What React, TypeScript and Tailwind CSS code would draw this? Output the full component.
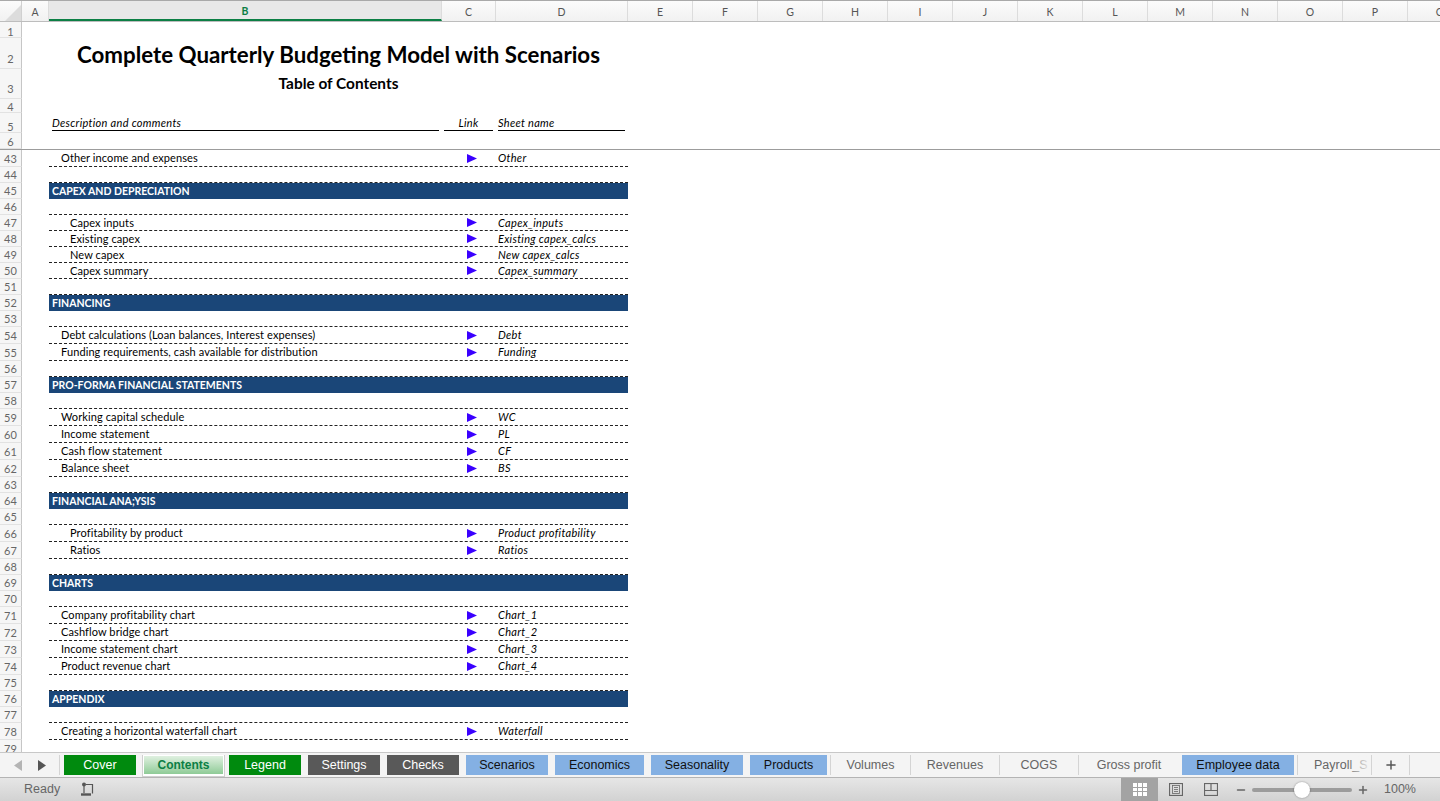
import { Minus, Plus } from "lucide-react";

const columns = [
  { name: "A", w: "w-[27px]" },
  { name: "B", w: "w-[393px]", active: true },
  { name: "C", w: "w-[54px]" },
  { name: "D", w: "w-[132px]" },
  { name: "E", w: "w-[65px]" },
  { name: "F", w: "w-[65px]" },
  { name: "G", w: "w-[65px]" },
  { name: "H", w: "w-[65px]" },
  { name: "I", w: "w-[65px]" },
  { name: "J", w: "w-[65px]" },
  { name: "K", w: "w-[65px]" },
  { name: "L", w: "w-[65px]" },
  { name: "M", w: "w-[65px]" },
  { name: "N", w: "w-[65px]" },
  { name: "O", w: "w-[65px]" },
  { name: "P", w: "w-[65px]" },
  { name: "Q", w: "w-[65px]" },
];

type Row = {
  n: number;
  h: string;
  kind?: "band" | "link" | "rule";
  label?: string;
  pad?: string;
  sheet?: string;
};

const rows: Row[] = [
  { n: 43, h: "h-[17px]", kind: "link", label: "Other income and expenses", pad: "pl-[12px]", sheet: "Other" },
  { n: 44, h: "h-[16px]", kind: "rule" },
  { n: 45, h: "h-[16px]", kind: "band", label: "CAPEX AND DEPRECIATION" },
  { n: 46, h: "h-[16px]", kind: "rule" },
  { n: 47, h: "h-[16px]", kind: "link", label: "Capex inputs", pad: "pl-[21px]", sheet: "Capex_inputs" },
  { n: 48, h: "h-[16px]", kind: "link", label: "Existing capex", pad: "pl-[21px]", sheet: "Existing capex_calcs" },
  { n: 49, h: "h-[16px]", kind: "link", label: "New capex", pad: "pl-[21px]", sheet: "New capex_calcs" },
  { n: 50, h: "h-[16px]", kind: "link", label: "Capex summary", pad: "pl-[21px]", sheet: "Capex_summary" },
  { n: 51, h: "h-[16px]", kind: "rule" },
  { n: 52, h: "h-[16px]", kind: "band", label: "FINANCING" },
  { n: 53, h: "h-[16px]", kind: "rule" },
  { n: 54, h: "h-[17px]", kind: "link", label: "Debt calculations (Loan balances, Interest expenses)", pad: "pl-[12px]", sheet: "Debt" },
  { n: 55, h: "h-[17px]", kind: "link", label: "Funding requirements, cash available for distribution", pad: "pl-[12px]", sheet: "Funding" },
  { n: 56, h: "h-[16px]", kind: "rule" },
  { n: 57, h: "h-[16px]", kind: "band", label: "PRO-FORMA FINANCIAL STATEMENTS" },
  { n: 58, h: "h-[16px]", kind: "rule" },
  { n: 59, h: "h-[17px]", kind: "link", label: "Working capital schedule", pad: "pl-[12px]", sheet: "WC" },
  { n: 60, h: "h-[17px]", kind: "link", label: "Income statement", pad: "pl-[12px]", sheet: "PL" },
  { n: 61, h: "h-[17px]", kind: "link", label: "Cash flow statement", pad: "pl-[12px]", sheet: "CF" },
  { n: 62, h: "h-[17px]", kind: "link", label: "Balance sheet", pad: "pl-[12px]", sheet: "BS" },
  { n: 63, h: "h-[16px]", kind: "rule" },
  { n: 64, h: "h-[16px]", kind: "band", label: "FINANCIAL ANA;YSIS" },
  { n: 65, h: "h-[16px]", kind: "rule" },
  { n: 66, h: "h-[17px]", kind: "link", label: "Profitability by product", pad: "pl-[21px]", sheet: "Product profitability" },
  { n: 67, h: "h-[17px]", kind: "link", label: "Ratios", pad: "pl-[21px]", sheet: "Ratios" },
  { n: 68, h: "h-[16px]", kind: "rule" },
  { n: 69, h: "h-[16px]", kind: "band", label: "CHARTS" },
  { n: 70, h: "h-[16px]", kind: "rule" },
  { n: 71, h: "h-[17px]", kind: "link", label: "Company profitability chart", pad: "pl-[12px]", sheet: "Chart_1" },
  { n: 72, h: "h-[17px]", kind: "link", label: "Cashflow bridge chart", pad: "pl-[12px]", sheet: "Chart_2" },
  { n: 73, h: "h-[17px]", kind: "link", label: "Income statement chart", pad: "pl-[12px]", sheet: "Chart_3" },
  { n: 74, h: "h-[17px]", kind: "link", label: "Product revenue chart", pad: "pl-[12px]", sheet: "Chart_4" },
  { n: 75, h: "h-[16px]", kind: "rule" },
  { n: 76, h: "h-[16px]", kind: "band", label: "APPENDIX" },
  { n: 77, h: "h-[16px]", kind: "rule" },
  { n: 78, h: "h-[17px]", kind: "link", label: "Creating a horizontal waterfall chart", pad: "pl-[12px]", sheet: "Waterfall" },
  { n: 79, h: "h-[17px]" },
];

const tabs = [
  { name: "Cover", w: "w-[72px] ml-[4px]", cls: "bg-[#008a0e] text-white" },
  { name: "Contents", active: true, w: "w-[83px] ml-[6px]", cls: "text-[#0c7f45] font-bold text-[12px]" },
  { name: "Legend", w: "w-[72px] ml-[4px]", cls: "bg-[#008a0e] text-white" },
  { name: "Settings", w: "w-[72px] ml-[7px]", cls: "bg-[#595959] text-white" },
  { name: "Checks", w: "w-[72px] ml-[7px]", cls: "bg-[#595959] text-white" },
  { name: "Scenarios", w: "w-[82px] ml-[7px]", cls: "bg-[#84b0e3] text-[#111]" },
  { name: "Economics", w: "w-[89px] ml-[7px]", cls: "bg-[#84b0e3] text-[#111]" },
  { name: "Seasonality", w: "w-[92px] ml-[7px]", cls: "bg-[#84b0e3] text-[#111]" },
  { name: "Products", w: "w-[77px] ml-[7px]", cls: "bg-[#84b0e3] text-[#111]" },
  { name: "Volumes", w: "w-[80px] ml-[3px] border-l", cls: "text-[#666]" },
  { name: "Revenues", w: "w-[89px] border-l", cls: "text-[#666]" },
  { name: "COGS", w: "w-[79px] border-l", cls: "text-[#666]" },
  { name: "Gross profit", w: "w-[101px] border-l", cls: "text-[#666]" },
  { name: "Employee data", w: "w-[112px] ml-[3px]", cls: "bg-[#84b0e3] text-[#111]" },
];

function RowNum({ n, h, pb = "pb-[2px]" }: { n: number; h: string; pb?: string }) {
  return (
    <div className={`${h} ${pb} w-[22px] shrink-0 flex items-end justify-center border-r border-b border-r-[#c6c6c6] border-b-[#e2e2e2] bg-[#f6f6f6] text-[11px] leading-[11px] text-[#666]`}>
      {n}
    </div>
  );
}

function SheetRow({ row }: { row: Row }) {
  if (row.kind === "band") {
    return (
      <div className="flex w-[579px] h-full items-end bg-[#1a4678] pl-[3px] text-[10.5px] leading-[15px] font-bold text-white">
        {row.label}
      </div>
    );
  }
  if (row.kind === "rule") {
    return <div className="w-[579px] h-full border-b border-dashed border-[#222]" />;
  }
  if (row.kind === "link") {
    const nudge = row.h === "h-[16px]" ? "pt-[1px]" : "";
    return (
      <div className="flex w-[579px] h-full items-center border-b border-dashed border-[#222] text-[11px] leading-[14px] tracking-[0.1px] text-black">
        <div className={`w-[393px] ${row.pad} ${nudge}`}>{row.label}</div>
        <div className="w-[54px] flex pl-[25px]">
          <svg width="10" height="9" viewBox="0 0 10 9">
            <polygon points="0,0 10,4.5 0,9" fill="#3a00ff" />
          </svg>
        </div>
        <div className={`pl-[2px] italic tracking-[0.3px] ${nudge}`}>{row.sheet}</div>
      </div>
    );
  }
  return null;
}

function GridIcon() {
  return (
    <svg width="14" height="13" viewBox="0 0 14 13" fill="#fff">
      <rect x="0" y="0" width="14" height="13" />
      <path d="M4.5 0v13M9.5 0v13M0 4.5h14M0 8.5h14" stroke="#a3a3a3" strokeWidth="1" />
    </svg>
  );
}

export default function App() {
  return (
    <div className="w-[1440px] h-[801px] flex flex-col overflow-hidden bg-white font-['Lato',sans-serif]">
      {/* column letters */}
      <div className="flex h-[22px] shrink-0 overflow-hidden border-t border-t-[#a9a9a9] border-b border-b-[#bdbdbd] bg-gradient-to-b from-[#fbfbfb] to-[#f1f1f1]">
        <div className="w-[22px] shrink-0 border-r border-[#d0d0d0] flex items-end justify-end">
          <svg width="16" height="16" viewBox="0 0 16 16">
            <polygon points="16,0 16,16 0,16" fill="#dcdcdc" />
          </svg>
        </div>
        {columns.map((c) => (
          <div
            key={c.name}
            className={`${c.w} shrink-0 flex items-center justify-center border-r border-[#dcdcdc] pt-[3px] text-[10.5px] ${
              c.active ? "bg-[#e8e8e8] text-[#0c7f45] font-bold border-b-2 border-b-[#0c7f45]" : "text-[#555]"
            }`}
          >
            {c.name}
          </div>
        ))}
      </div>

      {/* frozen title rows */}
      <div className="flex flex-col shrink-0 border-b border-[#9c9c9c]">
        <div className="flex h-[16px]">
          <RowNum n={1} h="h-[16px]" pb="pb-0" />
        </div>
        <div className="flex h-[31px]">
          <RowNum n={2} h="h-[31px]" pb="pb-[4px]" />
          <div className="ml-[27px] w-[579px] pt-[2px] flex items-center justify-center text-[22.3px] font-bold text-black">
            Complete Quarterly Budgeting Model with Scenarios
          </div>
        </div>
        <div className="flex h-[30px]">
          <RowNum n={3} h="h-[30px]" pb="pb-[4px]" />
          <div className="ml-[27px] w-[579px] pb-[1px] flex items-center justify-center text-[15.4px] font-bold text-black">
            Table of Contents
          </div>
        </div>
        <div className="flex h-[14px]">
          <RowNum n={4} h="h-[14px]" pb="pb-0" />
        </div>
        <div className="flex h-[20px]">
          <RowNum n={5} h="h-[20px]" pb="pb-0" />
          <div className="ml-[30px] flex text-[11px] leading-[15px] tracking-[0.3px] italic text-black">
            <div className="w-[387px] h-[18px] flex items-end border-b border-black">Description and comments</div>
            <div className="ml-[5px] w-[49px] h-[18px] flex items-end justify-center border-b border-black">Link</div>
            <div className="ml-[5px] w-[127px] h-[18px] flex items-end border-b border-black">Sheet name</div>
          </div>
        </div>
        <div className="flex h-[16px]">
          <RowNum n={6} h="h-[16px]" pb="pb-[1px]" />
        </div>
      </div>

      {/* scrolled rows */}
      <div className="flex-1 overflow-hidden">
        {rows.map((row) => (
          <div key={row.n} className={`flex ${row.h}`}>
            <RowNum n={row.n} h={row.h} />
            <div className="ml-[27px] h-full">
              <SheetRow row={row} />
            </div>
          </div>
        ))}
      </div>

      {/* sheet tabs */}
      <div className="flex h-[26px] shrink-0 items-center border-t border-t-[#c8c8c8] border-b border-b-[#b4b4b4] bg-[#f4f4f4] font-['Liberation_Sans',sans-serif] text-[12.5px]">
        <div className="w-[60px] h-[20px] shrink-0 flex items-center gap-[14px] pl-[14px] border-r border-[#d4d4d4]">
          <svg width="9" height="11" viewBox="0 0 9 11">
            <polygon points="8,0 8,11 0,5.5" fill="#b4b4b4" />
          </svg>
          <svg width="9" height="11" viewBox="0 0 9 11">
            <polygon points="1,0 1,11 9,5.5" fill="#555" />
          </svg>
        </div>
        {tabs.map((t) =>
          t.active ? (
            <div
              key={t.name}
              className={`${t.w} shrink-0 h-[22px] mb-[-2px] flex items-center justify-center border-x border-b border-[#d0d0d0] bg-white p-[1px] pb-[2px] ${t.cls}`}
            >
              <div className="w-full h-full flex items-center justify-center bg-gradient-to-b from-[#dff0e0] to-[#8fcb97]">{t.name}</div>
            </div>
          ) : (
            <div key={t.name} className={`${t.w} shrink-0 h-[20px] flex items-center justify-center border-[#d4d4d4] ${t.cls}`}>
              {t.name}
            </div>
          )
        )}
        <div className="relative ml-[3px] w-[75px] h-[20px] shrink-0 overflow-hidden flex items-center pl-[16px] border-l border-r border-[#d4d4d4] text-[#666] whitespace-nowrap">
          Payroll_S
          <div className="absolute right-0 top-0 h-full w-[24px] bg-gradient-to-r from-transparent to-[#f4f4f4]" />
        </div>
        <div className="w-[38px] h-[20px] shrink-0 flex items-center justify-center border-r border-[#d4d4d4]">
          <Plus size={14} strokeWidth={2.5} className="text-[#555]" />
        </div>
      </div>

      {/* status bar */}
      <div className="flex h-[23px] shrink-0 items-center bg-gradient-to-b from-[#e6e6e6] to-[#d2d2d2] font-['Liberation_Sans',sans-serif] text-[12.5px] text-[#666]">
        <span className="ml-[24px]">Ready</span>
        <svg className="ml-[21px]" width="14" height="15" viewBox="0 0 14 15" fill="none" stroke="#555" strokeWidth="1.2">
          <circle cx="3" cy="2.5" r="2" fill="#555" stroke="none" />
          <path d="M5 2.5h6.5v9M3 3v8" />
          <path d="M0 12.5h10" strokeWidth="2.4" />
        </svg>
        <div className="ml-auto flex h-full items-center">
          <div className="w-[37px] h-full flex items-center justify-center bg-[#a3a3a3]">
            <GridIcon />
          </div>
          <div className="w-[35px] flex justify-center">
            <svg width="14" height="13" viewBox="0 0 14 13" fill="none" stroke="#666">
              <rect x="0.5" y="0.5" width="13" height="12" strokeWidth="1.2" />
              <rect x="3.5" y="2.5" width="7" height="8" strokeWidth="0.8" />
              <path d="M5 4.5h4M5 6.5h4M5 8.5h4" strokeWidth="0.8" />
            </svg>
          </div>
          <div className="w-[36px] flex justify-center">
            <svg width="14" height="13" viewBox="0 0 14 13" fill="none" stroke="#666" strokeWidth="1.2">
              <rect x="0.5" y="0.5" width="13" height="12" />
              <path d="M7 0.5v7M0.5 7.5h13" />
            </svg>
          </div>
          <Minus size={12} strokeWidth={3} className="ml-[6px] text-[#666]" />
          <div className="ml-[5px] w-[100px] h-[4px] rounded-full bg-[#9c9c9c] flex items-center justify-center">
            <div className="w-[16px] h-[16px] rounded-full bg-white shadow-[0_0_2px_rgba(0,0,0,0.4)]" />
          </div>
          <Plus size={12} strokeWidth={3} className="ml-[5px] text-[#666]" />
          <span className="ml-[15px] mr-[24px]">100%</span>
        </div>
      </div>
    </div>
  );
}
